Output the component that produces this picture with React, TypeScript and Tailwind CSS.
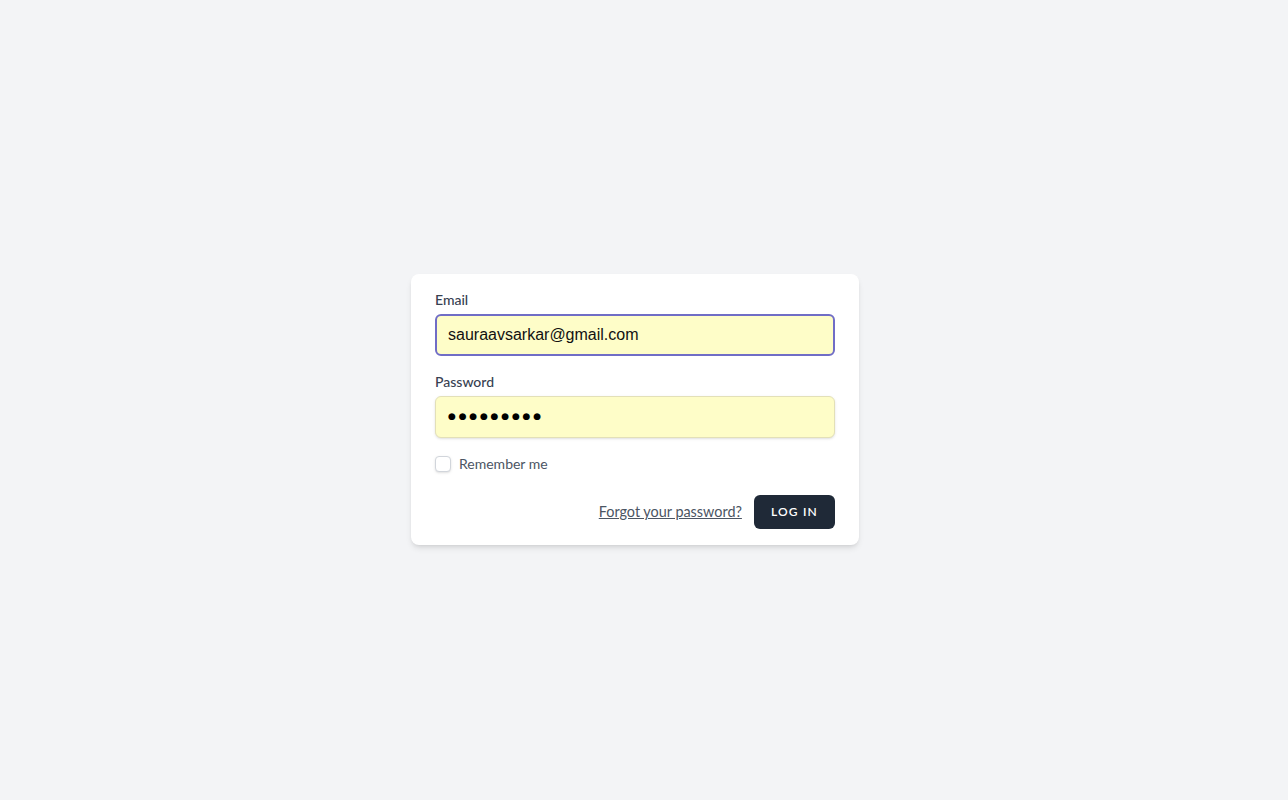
import React from "react";

export default function App() {
  return (
    <div
      className="min-h-screen flex flex-col items-center justify-center bg-[#f3f4f6] pt-[18px] pr-[18px]"
      style={{ fontFamily: "Lato, 'Open Sans', sans-serif" }}
    >
      <div className="w-[448px] bg-white shadow-md rounded-lg px-6 py-4 overflow-hidden">
        <form onSubmit={(e) => e.preventDefault()}>
          <div>
            <label className="block text-sm font-medium text-[#374151] leading-5">Email</label>
            <input
              readOnly
              value="sauraavsarkar@gmail.com"
              className="block mt-1 w-full h-[42px] rounded-md border-2 border-[#706dc6] bg-[#fefdc8] px-[11px] text-base text-[#111] outline-none"
              style={{ fontFamily: "'Liberation Sans', Arial, sans-serif" }}
            />
          </div>
          <div className="mt-4">
            <label className="block text-sm font-medium text-[#374151] leading-5">Password</label>
            <div className="mt-1 w-full h-[42px] rounded-md border border-[#e3e0b8] bg-[#fefdc8] px-3 flex items-center shadow-sm">
              <span
                className="text-[9px] tracking-[2.8px] text-black leading-none"
                style={{ fontFamily: "'DejaVu Sans', sans-serif" }}
              >
                ●●●●●●●●●
              </span>
            </div>
          </div>
          <div className="block mt-4">
            <label className="inline-flex items-center">
              <span className="w-4 h-4 rounded border border-[#d1d5db] bg-white shadow-sm" />
              <span className="ms-2 text-sm text-[#4b5563]">Remember me</span>
            </label>
          </div>
          <div className="flex items-center justify-end mt-[17px]">
            <a href="#" className="underline text-[14.4px] text-[#4b5563] rounded-md">
              Forgot your password?
            </a>
            <button
              type="submit"
              className="ms-3 inline-flex items-center px-4 py-2 bg-[#1f2937] border border-transparent rounded-md font-semibold text-xs leading-4 text-white uppercase tracking-widest"
            >
              Log in
            </button>
          </div>
        </form>
      </div>
    </div>
  );
}
